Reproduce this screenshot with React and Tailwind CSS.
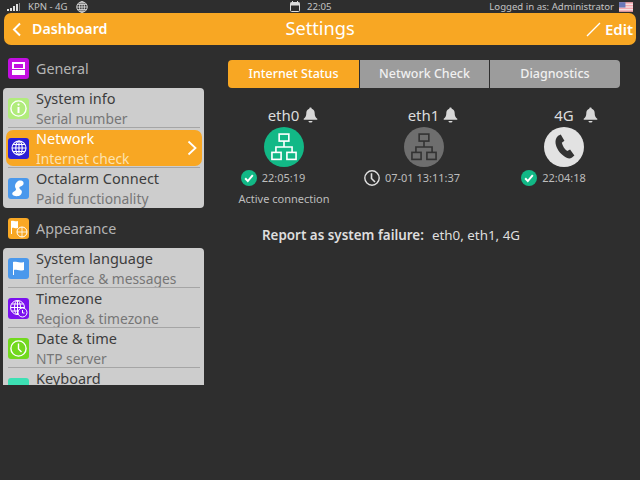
import React from "react";

const F = { fontFamily: '"Noto Sans", "Open Sans", sans-serif' };

function Net({ color, stroke }) {
  return (
    <svg width="26" height="28" viewBox="0 0 24 26" fill="none" stroke={stroke} strokeWidth="1.500">
      <rect x="7.500" y="1" width="9" height="6.500" />
      <path d="M12 7.500V13M4.500 18v-5h15v5" />
      <rect x="0.800" y="18" width="8.500" height="6.500" />
      <rect x="14.700" y="18" width="8.500" height="6.500" />
    </svg>
  );
}

function Bell() {
  return (
    <svg width="15" height="16" viewBox="0 0 15 16" fill="#d8d8d8">
      <path d="M7.500 0.500c.8 0 1.200.5 1.200 1.200 2.200.6 3 2.400 3 4.500 0 2.600.8 4 2.600 5.600v1H.7v-1c1.800-1.600 2.600-3 2.600-5.600 0-2.100.8-3.900 3-4.500 0-.7.4-1.200 1.200-1.200z" />
      <path d="M5.500 14h4c0 1-.9 1.600-2 1.600s-2-.6-2-1.600z" />
    </svg>
  );
}

function Check() {
  return (
    <svg width="16" height="16" viewBox="0 0 16 16">
      <circle cx="8" cy="8" r="8" fill="#12b886" />
      <path d="M4.200 8.300l2.600 2.800 5-6" fill="none" stroke="#fff" strokeWidth="2" />
    </svg>
  );
}

function Clock() {
  return (
    <svg width="16" height="16" viewBox="0 0 16 16" fill="none" stroke="#e0e0e0" strokeWidth="1.400">
      <circle cx="8" cy="8" r="7.200" />
      <path d="M7.500 3.200V8.500l3.500 3.500" strokeWidth="1.600" />
    </svg>
  );
}

function Tile({ className, children }) {
  return (
    <div className={`w-[21px] h-[21px] rounded-[3px] flex items-center justify-center shrink-0 ${className}`}>
      {children}
    </div>
  );
}

function Globe({ s = 15, c = "#fff" }) {
  return (
    <svg width={s} height={s} viewBox="0 0 16 16" fill="none" stroke={c} strokeWidth="1.100">
      <circle cx="8" cy="8" r="7" />
      <ellipse cx="8" cy="8" rx="3.200" ry="7" />
      <path d="M8 1v14M1 8h14M2 4.500h12M2 11.500h12" />
    </svg>
  );
}

const icons = {
  general: (
    <Tile className="bg-[#c20fe0]">
      <svg width="15" height="15" viewBox="0 0 15 15">
        <rect x="1" y="1" width="13" height="13" fill="#fff" />
        <rect x="3" y="3" width="9" height="4" fill="#c20fe0" />
        <rect x="1" y="8" width="13" height="1" fill="#c20fe0" />
      </svg>
    </Tile>
  ),
  info: (
    <Tile className="bg-[#b1ec7c]">
      <svg width="17" height="17" viewBox="0 0 17 17" fill="none" stroke="#fff" strokeWidth="1.400">
        <circle cx="8.500" cy="8.500" r="7.600" />
        <path d="M8.500 7v6" strokeWidth="2" />
        <circle cx="8.500" cy="4.600" r="1.100" fill="#fff" stroke="none" />
      </svg>
    </Tile>
  ),
  network: (
    <Tile className="bg-[#2b1fd6]">
      <Globe s={16} />
    </Tile>
  ),
  connect: (
    <Tile className="bg-[#4a98ec]">
      <svg width="13" height="17" viewBox="0 0 13 17" fill="#fff">
        <path d="M6 1c2-1 5-.5 5.500 1.500S10.500 6 8.500 6.500 7.500 9 9 10s1 3.500-.5 5-5 1.500-7 .5S0 12.500 2 11.500 4.500 9.500 3.500 8 3 3 6 1z" />
      </svg>
    </Tile>
  ),
  appearance: (
    <Tile className="bg-[#f9a825]">
      <svg width="19" height="19" viewBox="0 0 19 19">
        <path d="M2 2c2-1 4 1 7 0v7c-3 1-5-1-6 0v6H2z" fill="#fff" />
        <circle cx="13" cy="13" r="5" fill="none" stroke="#fff" strokeWidth="1" />
        <path d="M13 8v10M8 13h10" stroke="#fff" strokeWidth="0.800" />
      </svg>
    </Tile>
  ),
  language: (
    <Tile className="bg-[#4a98ec]">
      <svg width="13" height="15" viewBox="0 0 13 15">
        <path d="M1 1c3-1 6 1.500 11 0v8c-5 1.500-8-1-10 0v5H1z" fill="#fff" />
      </svg>
    </Tile>
  ),
  timezone: (
    <Tile className="bg-[#7a10ee]">
      <svg width="19" height="19" viewBox="0 0 19 19" fill="none" stroke="#fff" strokeWidth="1">
        <circle cx="8.500" cy="8.500" r="7" />
        <ellipse cx="8.500" cy="8.500" rx="3" ry="7" />
        <path d="M8.500 1.500v14M1.500 8.500h14M2.500 5h12M2.500 12h12" />
        <circle cx="13.500" cy="13.500" r="4.500" fill="#7a10ee" />
        <path d="M13.500 11v3h2" />
      </svg>
    </Tile>
  ),
  date: (
    <Tile className="bg-[#72d91e]">
      <svg width="17" height="17" viewBox="0 0 17 17" fill="none" stroke="#fff" strokeWidth="1.400">
        <circle cx="8.500" cy="8.500" r="7.600" />
        <path d="M8.500 3.500v5.500l3 3" />
      </svg>
    </Tile>
  ),
  keyboard: <Tile className="bg-[#3de0b4]" />,
};

function Row({ icon, title, sub, active, last }) {
  return (
    <div className="relative h-10 flex items-center px-[5px]">
      {active && <div className="absolute left-[3px] right-[2px] top-[2px] bottom-[2px] bg-[#f8a723] rounded-[7px]" />}
      <div className="relative flex items-center gap-[7px] w-full">
        {icon}
        <div className="flex flex-col">
          <span className={`text-[14.5px] leading-5 ${active ? "text-white" : "text-[#3d3d3d]"}`}>{title}</span>
          {sub && <span className={`relative top-[1px] text-[13.800px] leading-5 ${active ? "text-[#fde3b0]" : "text-[#767676]"}`}>{sub}</span>}
          {!sub && <span className="h-5" />}
        </div>
        {active && (
          <svg className="absolute right-[2px] top-[12px]" width="10" height="16" viewBox="0 0 10 16" fill="none" stroke="#fff" strokeWidth="1.800">
            <path d="M1.500 1.500L8.500 8l-7 6.500" />
          </svg>
        )}
      </div>
      {!last && <div className="absolute left-[5px] right-[4px] bottom-0 h-px bg-[#a5a5a5]" />}
    </div>
  );
}

function Section({ icon, title }) {
  return (
    <div className="h-10 flex items-center gap-[7px] px-[5px]">
      {icon}
      <span className="relative top-[1px] text-[14.3px] text-[#b4b4b4]">{title}</span>
    </div>
  );
}

function Iface({ name, gap, namePad, circle, children, status, note, statusPad }) {
  return (
    <div className="flex flex-col items-center">
      <div className={`h-5 flex items-center ${namePad} ${gap}`}>
        <span className="text-[15px] text-[#dcdcdc]">{name}</span>
        <Bell />
      </div>
      <div className={`w-10 h-10 mt-[2px] rounded-full flex items-center justify-center ${circle}`}>{children}</div>
      <div className={`h-5 mt-[1px] flex items-center gap-[5px] text-[11px] text-[#bdbdbd] ${statusPad}`}>{status}</div>
      {note && <div className="mt-[1px] h-5 flex items-center text-[11px] text-[#bdbdbd]">{note}</div>}
    </div>
  );
}

export default function App() {
  return (
    <div style={F} className="w-[640px] h-[480px] bg-[#2e2e2e] overflow-hidden flex flex-col">
      <div className="h-[13px] flex items-center justify-between px-[7px] text-[9.600px] text-[#c4c4c4] leading-none relative">
        <div className="flex items-center gap-[6px]">
          <svg width="15" height="8" viewBox="0 0 15 8" fill="#e0e0e0">
            <rect x="0" y="6" width="2" height="2" />
            <rect x="3" y="5" width="2" height="3" />
            <rect x="6" y="3" width="2" height="5" />
            <rect x="9" y="1" width="2" height="7" />
            <rect x="12" y="0" width="1" height="8" fill="#888" />
          </svg>
          <span>KPN - 4G</span>
          <span className="ml-[2px]"><Globe s={12} c="#e8e8e8" /></span>
        </div>
        <div className="absolute left-[290px] flex items-center gap-[7px]">
          <svg width="10" height="11" viewBox="0 0 10 11">
            <rect x="0.500" y="1.500" width="9" height="9" rx="1" fill="none" stroke="#ddd" />
            <rect x="0.500" y="1.500" width="9" height="3" fill="#ddd" />
            <path d="M2.500 0v2M7.500 0v2" stroke="#ddd" />
          </svg>
          <span>22:05</span>
        </div>
        <div className="flex items-center gap-[5px]">
          <span>Logged in as: Administrator</span>
          <svg width="14" height="10" viewBox="0 0 13 9">
            <rect width="13" height="9" fill="#f3a6ad" />
            <path d="M0 2h13M0 4.500h13M0 7h13" stroke="#f4f4f4" />
            <rect width="6" height="5" fill="#6a78b8" />
          </svg>
        </div>
      </div>

      <div className="h-[32px] mx-[4px] bg-[#f8a723] rounded-[7px] flex items-center relative shrink-0 text-white">
        <svg className="ml-[8px]" width="10" height="15" viewBox="0 0 10 15" fill="none" stroke="#fff" strokeWidth="2">
          <path d="M8 1.500L2 7.500l6 6" />
        </svg>
        <span className="ml-[10px] text-[14.2px] font-semibold">Dashboard</span>
        <span className="absolute left-0 right-0 text-center text-[18.200px]">Settings</span>
        <div className="ml-auto mr-[3px] flex items-center gap-[4px] relative">
          <svg width="15" height="15" viewBox="0 0 15 15" fill="none" stroke="#fff" strokeWidth="1.400">
            <path d="M14 1L3 12M3 12l-2 2" />
          </svg>
          <span className="text-[15px] font-semibold">Edit</span>
        </div>
      </div>

      <div className="flex mt-[3px]">
        <div className="w-[204px] h-[337px] overflow-hidden pl-[3px] shrink-0">
          <Section icon={icons.general} title="General" />
          <div className="bg-[#cdcdcd] rounded-[4px]">
            <Row icon={icons.info} title="System info" sub="Serial number" />
            <Row icon={icons.network} title="Network" sub="Internet check" active />
            <Row icon={icons.connect} title="Octalarm Connect" sub="Paid functionality" last />
          </div>
          <Section icon={icons.appearance} title="Appearance" />
          <div className="bg-[#cdcdcd] rounded-t-[4px]">
            <Row icon={icons.language} title="System language" sub="Interface & messages" />
            <Row icon={icons.timezone} title="Timezone" sub="Region & timezone" />
            <Row icon={icons.date} title="Date & time" sub="NTP server" />
            <Row icon={icons.keyboard} title="Keyboard" last />
          </div>
        </div>

        <div className="w-[420px] ml-[10px]">
          <div className="ml-[14px] w-[392px] h-7 mt-[12px] flex gap-px rounded-[4px] overflow-hidden text-[12.500px] font-medium text-[#f0f0f0]">
            <div className="w-[131px] bg-[#f8a723] flex items-center justify-center text-white">Internet Status</div>
            <div className="w-[129px] bg-[#9c9c9c] flex items-center justify-center">Network Check</div>
            <div className="flex-1 bg-[#9c9c9c] flex items-center justify-center">Diagnostics</div>
          </div>
          <div className="grid grid-cols-3 mt-[17px]">
            <Iface
              name="eth0"
              gap="gap-1"
              namePad="pl-[18px]"
              circle="bg-[#12b886]"
              statusPad="pr-[22px]"
              status={<><Check /><span>22:05:19</span></>}
              note="Active connection"
            >
              <Net stroke="#fff" />
            </Iface>
            <Iface
              name="eth1"
              gap="gap-1"
              namePad="pl-[18px]"
              circle="bg-[#6e6e6e]"
              statusPad="pr-[24px]"
              status={<><Clock /><span>07-01 13:11:37</span></>}
            >
              <Net stroke="#333" />
            </Iface>
            <Iface
              name="4G"
              gap="gap-[9px]"
              namePad="pl-[24px]"
              circle="bg-[#e2e2e2]"
              statusPad="pr-[21px]"
              status={<><Check /><span>22:04:18</span></>}
            >
              <svg width="26" height="26" viewBox="0 0 24 24" fill="#333">
                <path d="M6.600 1.500l2.400-1 3.400 5.800-2.400 1.700c.6 2.800 2.600 6 5 7.800l2.600-1.400 4 5.400-2.200 1.800c-2 1.500-4.200 1-6.300-.4C8 18 4.800 13 4.200 8.500 3.900 5.500 4.700 3 6.600 1.500z" />
              </svg>
            </Iface>
          </div>
          <div className="mt-[16px] ml-[48px] flex items-center h-5 text-[13.400px] text-[#dedede]">
            <span className="font-semibold">Report as system failure:</span>
            <span className="ml-2">eth0, eth1, 4G</span>
          </div>
        </div>
      </div>
    </div>
  );
}
